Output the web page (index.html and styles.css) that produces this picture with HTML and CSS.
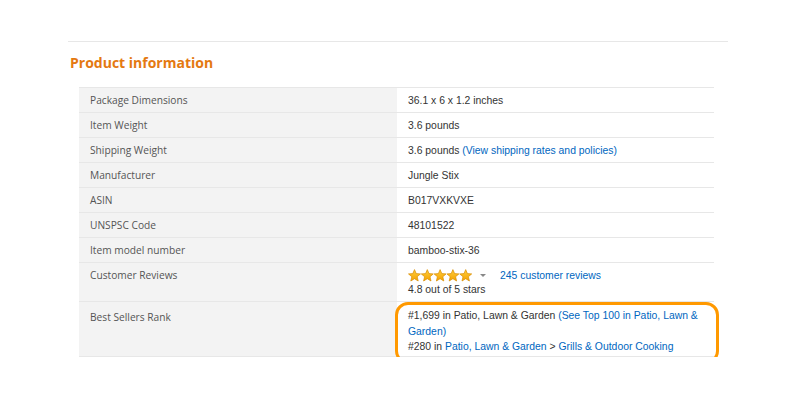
FILE: index.html
```html
<!DOCTYPE html>
<html>
<head>
<meta charset="utf-8">
<link rel="stylesheet" href="styles.css">
</head>
<body>
<div class="page">
  <hr class="divider">
  <h2 class="title">Product information</h2>
  <table class="info">
    <colgroup><col class="col-label"><col class="col-value"></colgroup>
    <tr><td class="label">Package Dimensions</td><td class="value">36.1 x 6 x 1.2 inches</td></tr>
    <tr><td class="label">Item Weight</td><td class="value">3.6 pounds</td></tr>
    <tr><td class="label">Shipping Weight</td><td class="value">3.6 pounds <a href="#">(View shipping rates and policies)</a></td></tr>
    <tr><td class="label">Manufacturer</td><td class="value">Jungle Stix</td></tr>
    <tr><td class="label">ASIN</td><td class="value">B017VXKVXE</td></tr>
    <tr><td class="label">UNSPSC Code</td><td class="value">48101522</td></tr>
    <tr><td class="label">Item model number</td><td class="value">bamboo-stix-36</td></tr>
    <tr class="tall"><td class="label">Customer Reviews</td><td class="value">
      <div class="stars-line">
        <span class="stars">
          <svg width="64" height="13" viewBox="0 0 64 13">
            <defs>
              <linearGradient id="g" x1="0" y1="0" x2="0" y2="1">
                <stop offset="0" stop-color="#ffce3d"/>
                <stop offset="1" stop-color="#f4a200"/>
              </linearGradient>
              <path id="s" d="M6.5 0.6 L8.2 4.6 L12.5 4.9 L9.2 7.7 L10.2 12 L6.5 9.7 L2.8 12 L3.8 7.7 L0.5 4.9 L4.8 4.6 Z" fill="url(#g)" stroke="#d88c00" stroke-width="0.7"/>
            </defs>
            <use href="#s" x="0"/>
            <use href="#s" x="12.8"/>
            <use href="#s" x="25.6"/>
            <use href="#s" x="38.4"/>
            <use href="#s" x="51.2"/>
          </svg>
        </span>
        <span class="caret"></span>
        <a href="#" class="reviews">245 customer reviews</a>
      </div>
      <div>4.8 out of 5 stars</div>
    </td></tr>
    <tr class="rank"><td class="label">Best Sellers Rank</td><td class="value">
      <div class="highlight">
        #1,699 in Patio, Lawn &amp; Garden <a href="#">(See Top 100 in Patio, Lawn &amp;<br>Garden)</a><br>
        #280 in <a href="#">Patio, Lawn &amp; Garden</a> &gt; <a href="#">Grills &amp; Outdoor Cooking</a>
      </div>
    </td></tr>
  </table>
</div>
</body>
</html>
```
FILE: styles.css
```css
html, body {
  margin: 0;
  padding: 0;
  background: #fff;
}
.page {
  width: 660px;
  margin-left: 68px;
  padding-top: 41px;
}
.divider {
  border: 0;
  border-top: 1px solid #e7e7e7;
  margin: 0;
  height: 0;
}
.title {
  font-family: "Open Sans", sans-serif;
  font-weight: 700;
  font-size: 14px;
  color: #e47911;
  margin: 11px 0 0 2px;
  line-height: 20px;
}
.info {
  margin: 14px 0 0 11px;
  width: 635px;
  table-layout: fixed;
  border-collapse: collapse;
  border-top: 1px solid #e7e7e7;
}
.col-label {
  width: 318px;
}
.col-value {
  width: 317px;
}
.info tr {
  border-bottom: 1px solid #e7e7e7;
}
.info td {
  height: 24px;
  padding: 0 4px 0 11px;
  vertical-align: middle;
}
.label {
  background: #f3f3f3;
  font-family: "Open Sans", sans-serif;
  font-size: 10.2px;
  color: #555;
}
.value {
  font-family: "Liberation Sans", Arial, sans-serif;
  font-size: 10.4px;
  color: #333;
  position: relative;
  white-space: nowrap;
}
a {
  color: #0066c0;
  text-decoration: none;
}
.info .tall td {
  vertical-align: top;
  padding-top: 5px;
  padding-bottom: 5px;
  height: 28px;
}
.stars-line {
  display: flex;
  align-items: center;
  height: 15px;
}
.stars svg {
  display: block;
}
.caret {
  width: 0;
  height: 0;
  border-left: 3px solid transparent;
  border-right: 3px solid transparent;
  border-top: 3px solid #888;
  margin: 0 14px 0 8px;
}
.value .stars-line + div {
  margin-top: 1px;
}
.info .rank td {
  vertical-align: top;
  height: 43px;
  padding-top: 6px;
  padding-bottom: 1px;
}
.info .rank .label {
  padding-top: 8px;
}
.highlight {
  line-height: 15.5px;
}
.highlight::before {
  content: "";
  position: absolute;
  left: -2px;
  top: 0;
  right: -5px;
  bottom: -8px;
  border: 3px solid #ff9900;
  border-radius: 13px;
  pointer-events: none;
}
```
